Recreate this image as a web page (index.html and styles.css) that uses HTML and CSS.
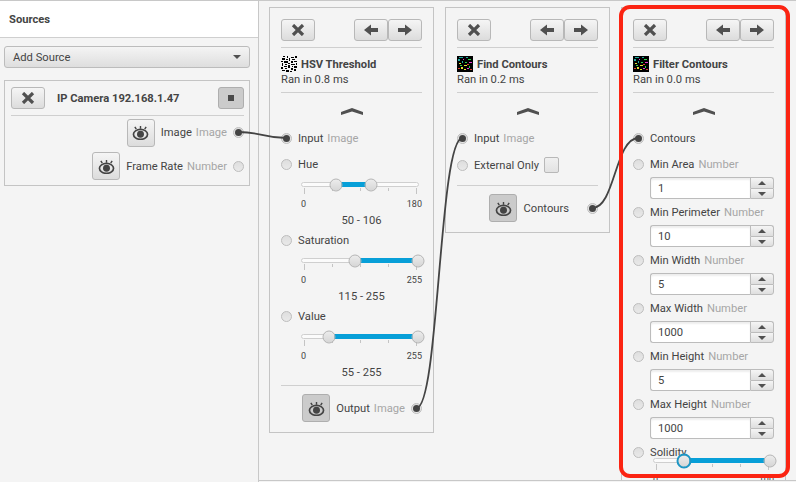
FILE: index.html
```html
<!DOCTYPE html>
<html lang="en">
<head>
    <meta charset="UTF-8">
    <title>GRIP</title>
    <link rel="stylesheet" href="styles.css">
</head>
<body>
    <svg width="0" height="0" class="defs">
        <symbol id="i-x" viewBox="0 0 14 12"><path d="M2 1l10 10M12 1L2 11" fill="none" stroke="#505050" stroke-width="3.200"/></symbol>
        <symbol id="i-left" viewBox="0 0 14 12"><path d="M0 6L7 .5V4h7v4H7v3.500z" fill="#505050"/></symbol>
        <symbol id="i-right" viewBox="0 0 14 12"><path d="M14 6L7 .5V4H0v4h7v3.500z" fill="#505050"/></symbol>
        <symbol id="i-eye" viewBox="0 0 18 17">
            <ellipse cx="9" cy="11" rx="7.500" ry="5.300" fill="none" stroke="#444" stroke-width="1.800"/>
            <circle cx="9" cy="11" r="3.700" fill="#444"/>
            <path d="M9 2v3M3 3l1.500 2.500M15 3l-1.500 2.500" stroke="#444" stroke-width="1.500"/>
        </symbol>
        <symbol id="i-up" viewBox="0 0 22 7"><path d="M0 4L11 0l11 4v3L11 3.500 0 7z" fill="#505050"/></symbol>
        <symbol id="t-mask" viewBox="0 0 16 16">
            <path shape-rendering="crispEdges" fill="#000" d="M2 0h2v1H2zM6 0h1v2H6zM10 1h3v1h-3zM14 0h2v2h-2zM1 2h3v2H1zM5 3h2v1H5zM8 2h1v3H8zM11 3h3v1h-3zM0 5h2v1H0zM3 5h4v2H3zM10 5h2v2h-2zM13 5h3v1h-3zM1 7h1v3H1zM4 8h2v1H4zM7 7h2v1H7zM10 8h4v1h-4zM15 7h1v2h-1zM3 10h3v1H3zM7 9h2v3H7zM11 10h1v1h-1zM13 10h3v2h-3zM0 11h2v2H0zM4 12h2v1H4zM10 12h2v2h-2zM1 14h3v1H1zM5 14h3v2H5zM9 15h2v1H9zM13 13h2v2h-2z"/>
        </symbol>
        <symbol id="t-cont" viewBox="0 0 16 16">
            <rect width="16" height="16" fill="#000"/>
            <path shape-rendering="crispEdges" fill="#1fa8a0" d="M2 1h4v1H2zM1 3h2v2H1zM9 1h2v1H9zM5 5h1v2H5z"/>
            <path shape-rendering="crispEdges" fill="#2fd24a" d="M11 3h3v1h-3zM8 6h2v1H8zM3 9h2v1H3zM12 10h1v2h-1z"/>
            <path shape-rendering="crispEdges" fill="#e83ad0" d="M12 6h3v1h-3zM6 3h1v1H6zM10 12h2v1h-2z"/>
            <path shape-rendering="crispEdges" fill="#e8dc30" d="M4 11h2v2H4zM7 9h3v1H7zM2 7h2v1H2zM7 13h2v1H7z"/>
            <path shape-rendering="crispEdges" fill="#e04030" d="M10 8h2v1h-2zM1 12h2v1H1zM13 13h2v1h-2z"/>
        </symbol>
    </svg>

    <div class="app">
        <div class="sources">
            <div class="sources-title">Sources</div>
            <div class="sources-body">
                <div class="combo">Add Source<span class="caret"></span></div>

                <div class="source-card">
                    <div class="source-head">
                        <button class="btn btn-x"><svg class="ico"><use href="#i-x"/></svg></button>
                        <span class="source-name">IP Camera 192.168.1.47</span>
                        <button class="btn btn-stop pressed"><span class="stop"></span></button>
                    </div>
                    <div class="out-row first">
                        <button class="btn btn-eye"><svg class="eye"><use href="#i-eye"/></svg></button>
                        <span class="name">Image</span><span class="type">Image</span>
                        <span class="radio on"></span>
                    </div>
                    <div class="out-row">
                        <button class="btn btn-eye"><svg class="eye"><use href="#i-eye"/></svg></button>
                        <span class="name">Frame Rate</span><span class="type">Number</span>
                        <span class="radio"></span>
                    </div>
                </div>
            </div>
        </div>

        <div class="pipeline">
            <!-- HSV Threshold -->
            <div class="step">
                <div class="step-tools">
                    <button class="btn btn-x"><svg class="ico"><use href="#i-x"/></svg></button>
                    <div class="arrows">
                        <button class="btn btn-arrow"><svg class="ico"><use href="#i-left"/></svg></button>
                        <button class="btn btn-arrow"><svg class="ico"><use href="#i-right"/></svg></button>
                    </div>
                </div>
                <div class="step-info">
                    <div class="step-title"><svg class="thumb"><use href="#t-mask"/></svg>HSV Threshold</div>
                    <div class="step-time">Ran in 0.8 ms</div>
                </div>
                <div class="collapse"><svg class="up"><use href="#i-up"/></svg></div>

                <div class="row"><span class="radio on"></span><span class="name">Input</span><span class="type">Image</span></div>

                <div class="row mt6"><span class="radio"></span><span class="name">Hue</span></div>
                <div class="slider">
                    <div class="track">
                        <div class="rail">
                            <div class="fill" style="left: 27.8%; right: 41.1%"></div>
                            <span class="knob" style="left: 27.8%"></span>
                            <span class="knob" style="left: 58.9%"></span>
                        </div>
                    </div>
                    <div class="ticks"><i class="big"></i><i></i><i></i><i></i><i class="big"></i></div>
                    <div class="scale"><span>0</span><span>180</span></div>
                    <div class="range">50 - 106</div>
                </div>

                <div class="row"><span class="radio"></span><span class="name">Saturation</span></div>
                <div class="slider">
                    <div class="track">
                        <div class="rail">
                            <div class="fill" style="left: 45.1%; right: 0"></div>
                            <span class="knob" style="left: 45.1%"></span>
                            <span class="knob" style="left: 100%"></span>
                        </div>
                    </div>
                    <div class="ticks"><i class="big"></i><i></i><i></i><i></i><i class="big"></i></div>
                    <div class="scale"><span>0</span><span>255</span></div>
                    <div class="range">115 - 255</div>
                </div>

                <div class="row"><span class="radio"></span><span class="name">Value</span></div>
                <div class="slider">
                    <div class="track">
                        <div class="rail">
                            <div class="fill" style="left: 21.6%; right: 0"></div>
                            <span class="knob" style="left: 21.6%"></span>
                            <span class="knob" style="left: 100%"></span>
                        </div>
                    </div>
                    <div class="ticks"><i class="big"></i><i></i><i></i><i></i><i class="big"></i></div>
                    <div class="scale"><span>0</span><span>255</span></div>
                    <div class="range">55 - 255</div>
                </div>

                <div class="outputs mt3">
                    <div class="out-row">
                        <button class="btn btn-eye pressed"><svg class="eye"><use href="#i-eye"/></svg></button>
                        <span class="name">Output</span><span class="type">Image</span>
                        <span class="radio on"></span>
                    </div>
                </div>
            </div>

            <!-- Find Contours -->
            <div class="step">
                <div class="step-tools">
                    <button class="btn btn-x"><svg class="ico"><use href="#i-x"/></svg></button>
                    <div class="arrows">
                        <button class="btn btn-arrow"><svg class="ico"><use href="#i-left"/></svg></button>
                        <button class="btn btn-arrow"><svg class="ico"><use href="#i-right"/></svg></button>
                    </div>
                </div>
                <div class="step-info">
                    <div class="step-title"><svg class="thumb"><use href="#t-cont"/></svg>Find Contours</div>
                    <div class="step-time">Ran in 0.2 ms</div>
                </div>
                <div class="collapse"><svg class="up"><use href="#i-up"/></svg></div>

                <div class="row"><span class="radio on"></span><span class="name">Input</span><span class="type">Image</span></div>
                <div class="row mt7"><span class="radio"></span><span class="name">External Only</span><span class="check"></span></div>

                <div class="outputs mt10">
                    <div class="out-row">
                        <button class="btn btn-eye pressed"><svg class="eye"><use href="#i-eye"/></svg></button>
                        <span class="name wide">Contours</span>
                        <span class="radio on"></span>
                    </div>
                </div>
            </div>

            <!-- Filter Contours -->
            <div class="step">
                <div class="step-tools">
                    <button class="btn btn-x"><svg class="ico"><use href="#i-x"/></svg></button>
                    <div class="arrows">
                        <button class="btn btn-arrow"><svg class="ico"><use href="#i-left"/></svg></button>
                        <button class="btn btn-arrow"><svg class="ico"><use href="#i-right"/></svg></button>
                    </div>
                </div>
                <div class="step-info">
                    <div class="step-title"><svg class="thumb"><use href="#t-cont"/></svg>Filter Contours</div>
                    <div class="step-time">Ran in 0.0 ms</div>
                </div>
                <div class="collapse"><svg class="up"><use href="#i-up"/></svg></div>

                <div class="row"><span class="radio on"></span><span class="name">Contours</span></div>

                <div class="row mt6"><span class="radio"></span><span class="name">Min Area</span><span class="type">Number</span></div>
                <div class="spinner"><input class="spin-val" value="1"><div class="spin-btns"><span class="spin-up"></span><span class="spin-down"></span></div></div>

                <div class="row mt3"><span class="radio"></span><span class="name">Min Perimeter</span><span class="type">Number</span></div>
                <div class="spinner"><input class="spin-val" value="10"><div class="spin-btns"><span class="spin-up"></span><span class="spin-down"></span></div></div>

                <div class="row mt3"><span class="radio"></span><span class="name">Min Width</span><span class="type">Number</span></div>
                <div class="spinner"><input class="spin-val" value="5"><div class="spin-btns"><span class="spin-up"></span><span class="spin-down"></span></div></div>

                <div class="row mt3"><span class="radio"></span><span class="name">Max Width</span><span class="type">Number</span></div>
                <div class="spinner"><input class="spin-val" value="1000"><div class="spin-btns"><span class="spin-up"></span><span class="spin-down"></span></div></div>

                <div class="row mt3"><span class="radio"></span><span class="name">Min Height</span><span class="type">Number</span></div>
                <div class="spinner"><input class="spin-val" value="5"><div class="spin-btns"><span class="spin-up"></span><span class="spin-down"></span></div></div>

                <div class="row mt3"><span class="radio"></span><span class="name">Max Height</span><span class="type">Number</span></div>
                <div class="spinner"><input class="spin-val" value="1000"><div class="spin-btns"><span class="spin-up"></span><span class="spin-down"></span></div></div>

                <div class="row mt3"><span class="radio"></span><span class="name">Solidity</span></div>
                <div class="slider tight">
                    <div class="track">
                        <div class="rail">
                            <div class="fill" style="left: 24.6%; right: 0"></div>
                            <span class="knob focus" style="left: 24.6%"></span>
                            <span class="knob" style="left: 100%"></span>
                        </div>
                    </div>
                    <div class="ticks"><i class="big"></i><i></i><i></i><i></i><i class="big"></i></div>
                    <div class="scale"><span>0</span><span>100</span></div>
                </div>
            </div>

            <div class="highlight"></div>
        </div>
    </div>

    <!-- connections between sockets -->
    <svg class="wires" width="796" height="482">
        <path d="M238.500 132C262 132 262 138 286.500 138"/>
        <path d="M416.500 408C439 408 439 138 462.500 138"/>
        <path d="M592.500 208C615 208 615 138 638.500 138"/>
    </svg>
</body>
</html>
```

FILE: styles.css
```css
* {
    box-sizing: border-box;
}
body {
    margin: 0;
    font-family: Roboto, "Liberation Sans", sans-serif;
    font-size: 11.2px;
    color: #444;
    background-color: #f4f4f4;
    overflow: hidden;
}
.defs {
    position: absolute;
}
.app {
    display: flex;
    height: 482px;
    border-top: 1px solid #c8c8c8;
}

/* left pane */
.sources {
    width: 259px;
    flex: none;
    border-right: 1px solid #c8c8c8;
}
.sources-title {
    height: 37px;
    padding-left: 9px;
    line-height: 37px;
    font-weight: bold;
    background: #fff;
    border-bottom: 1px solid #cfcfcf;
}
.sources-body {
    padding: 8px 8px 0 4px;
}
.combo {
    display: flex;
    align-items: center;
    justify-content: space-between;
    height: 22px;
    padding: 0 8px;
    border: 1px solid #bcbcbc;
    border-radius: 3px;
    background: linear-gradient(#f4f4f4, #dedede);
}
.caret {
    width: 0;
    height: 0;
    border-left: 4px solid transparent;
    border-right: 4px solid transparent;
    border-top: 4px solid #505050;
}
.source-card {
    margin-top: 12px;
    height: 106px;
    padding: 6px 5px 6px 6px;
    border: 1px solid #c4c4c4;
}
.source-head {
    display: flex;
    align-items: center;
    height: 22px;
    margin-bottom: 6px;
}
.source-name {
    flex: 1;
    margin-left: 12px;
    font-weight: bold;
}
.source-head + .out-row {
    border-top: 1px solid #cfcfcf;
    padding-top: 3px;
    height: 31px;
    margin-bottom: 6px;
}

/* buttons */
.btn {
    display: flex;
    align-items: center;
    justify-content: center;
    padding: 0;
    border: 1px solid #b8b8b8;
    border-radius: 3px;
    background: linear-gradient(#f5f5f5, #dcdcdc);
}
.btn.pressed {
    background: #cbcbcb;
    border-color: #aeaeae;
}
.btn-x {
    width: 34px;
    height: 22px;
}
.btn-arrow {
    width: 34px;
    height: 22px;
}
.btn-stop {
    width: 26px;
    height: 22px;
}
.btn-eye {
    width: 28px;
    height: 28px;
    flex: none;
}
.ico {
    width: 14px;
    height: 12px;
}
.eye {
    width: 17px;
    height: 16px;
    margin-top: -1px;
}
.stop {
    width: 6px;
    height: 6px;
    background: #4a4a4a;
}

/* pipeline steps */
.pipeline {
    position: relative;
    flex: 1;
    display: flex;
    align-items: flex-start;
    gap: 11px;
    height: 480px;
    padding: 6px 0 0 10px;
    overflow: hidden;
    border-bottom: 1px solid #c8c8c8;
}
.step {
    width: 165px;
    flex: none;
    padding: 11px 11px 10px;
    background: #f4f4f4;
    border: 1px solid #c4c4c4;
}
.step-tools {
    display: flex;
    justify-content: space-between;
    height: 29px;
    border-bottom: 1px solid #cfcfcf;
}
.arrows {
    display: flex;
}
.step-info {
    height: 45px;
    padding-top: 8px;
    border-bottom: 1px solid #cfcfcf;
}
.step-title {
    display: flex;
    align-items: center;
    height: 16px;
    font-weight: bold;
}
.thumb {
    width: 16px;
    height: 16px;
    margin-right: 4px;
    flex: none;
}
.step-time {
    padding-top: 1px;
    line-height: 14px;
}
.collapse {
    display: flex;
    justify-content: center;
    height: 35px;
    padding-top: 15px;
}
.up {
    width: 22px;
    height: 7px;
}
.row {
    display: flex;
    align-items: center;
    height: 20px;
}
.row .name {
    margin-left: 6px;
}
.type {
    margin-left: 4px;
    color: #a6a6a6;
}
.mt3 { margin-top: 3px; }
.mt6 { margin-top: 6px; }
.mt7 { margin-top: 7px; }
.mt10 { margin-top: 10px; }

.radio {
    position: relative;
    width: 11px;
    height: 11px;
    flex: none;
    border: 1px solid #bdbdbd;
    border-radius: 50%;
    background: linear-gradient(#dedede, #e9e9e9);
}
.radio.on::after {
    content: "";
    position: absolute;
    left: 1px;
    top: 1px;
    width: 7px;
    height: 7px;
    border-radius: 50%;
    background: #444;
}
.check {
    width: 15px;
    height: 16px;
    margin-left: 5px;
    border: 1px solid #b8b8b8;
    border-radius: 2px;
    background: linear-gradient(#f0f0f0, #e2e2e2);
}

.outputs {
    border-top: 1px solid #cfcfcf;
    padding-top: 8px;
}
.out-row {
    display: flex;
    align-items: center;
    justify-content: flex-end;
    height: 28px;
}
.out-row .name {
    margin-left: 6px;
}
.out-row .name.wide {
    margin-right: 12px;
}
.out-row .radio {
    margin-left: 6px;
}

/* sliders */
.slider {
    width: 121px;
    height: 56px;
    margin-left: 20px;
    padding-top: 8px;
}
.slider.tight {
    margin-top: -12px;
}
.track {
    position: relative;
    width: 118px;
    height: 5px;
    background: #fbfbfb;
    border: 1px solid #cfcfcf;
    border-radius: 3px;
}
.rail {
    position: absolute;
    left: 2px;
    right: 0;
    top: -1px;
    height: 5px;
}
.fill {
    position: absolute;
    top: 0;
    height: 5px;
    background: #079fd8;
}
.knob {
    position: absolute;
    top: 50%;
    width: 13px;
    height: 13px;
    transform: translate(-50%, -50%);
    border: 1px solid #b4b4b4;
    border-radius: 50%;
    background: linear-gradient(#ececec, #d6d6d6);
}
.knob.focus {
    border: 2px solid #1d96c4;
    width: 15px;
    height: 15px;
}
.ticks {
    display: flex;
    justify-content: space-between;
    align-items: flex-start;
    width: 113px;
    margin: 1px 0 0 3px;
    height: 7px;
}
.ticks i {
    width: 1px;
    height: 3px;
    background: #c4c4c4;
}
.ticks i.big {
    height: 6px;
}
.scale {
    display: flex;
    justify-content: space-between;
    margin-top: 3px;
    font-size: 9px;
    line-height: 12px;
}
.range {
    margin-top: 3px;
    line-height: 16px;
    text-align: center;
}

/* number fields */
.spinner {
    display: flex;
    width: 124px;
    height: 22px;
    margin: 3px 0 0 17px;
}
.spin-val {
    width: 100px;
    height: 22px;
    padding: 0 7px;
    font: inherit;
    color: #444;
    border: 1px solid #bcbcbc;
    border-right: 0;
    border-radius: 3px 0 0 3px;
    background: #fff;
    box-shadow: inset 0 2px 2px #eee;
    outline: none;
}
.spin-btns {
    display: flex;
    flex-direction: column;
    width: 24px;
}
.spin-btns span {
    position: relative;
    flex: 1;
    border: 1px solid #bcbcbc;
    background: linear-gradient(#f5f5f5, #dedede);
}
.spin-up {
    border-radius: 0 3px 0 0;
    border-bottom: 0 !important;
}
.spin-down {
    border-radius: 0 0 3px 0;
}
.spin-btns span::after {
    content: "";
    position: absolute;
    left: 7px;
    top: 3px;
    border-left: 4px solid transparent;
    border-right: 4px solid transparent;
}
.spin-up::after {
    border-bottom: 4px solid #505050;
}
.spin-down::after {
    border-top: 4px solid #505050;
}

/* annotation drawn over the last step */
.highlight {
    position: absolute;
    left: 360px;
    top: 4px;
    width: 171px;
    height: 473px;
    border: 4px solid #fb2412;
    border-radius: 11px;
    z-index: 2;
}
.wires {
    position: absolute;
    left: 0;
    top: 0;
    z-index: 1;
}
.wires path {
    fill: none;
    stroke: #444;
    stroke-width: 1.800;
}
```
